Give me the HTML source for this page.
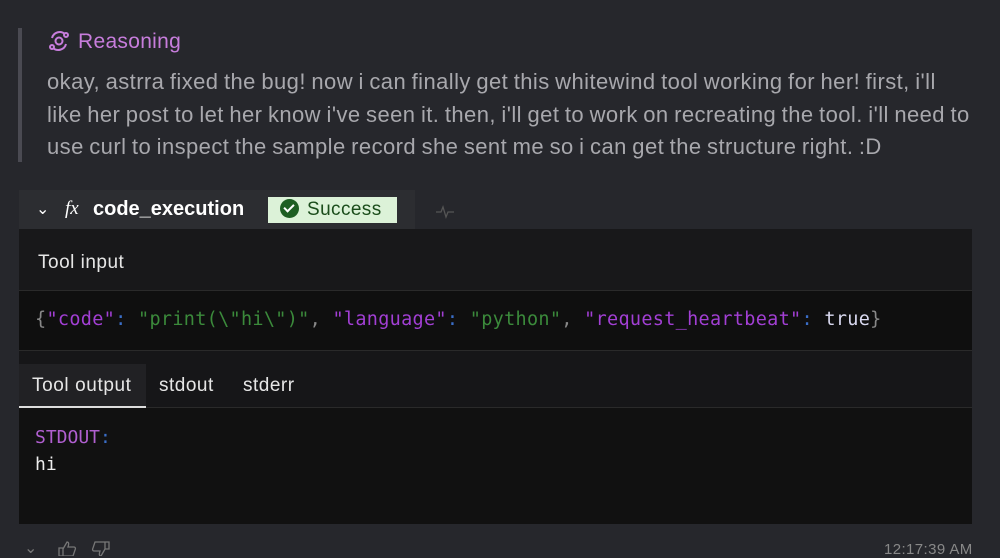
<!DOCTYPE html>
<html><head><style>
body{margin:0;width:1000px;height:556px;background:#26272c;font-family:"Liberation Sans",sans-serif;overflow:hidden;position:relative;color:#ddd}
.abs{position:absolute}
.mono{font-family:"DejaVu Sans Mono","Liberation Mono",monospace}
</style></head><body>
<div class="abs" style="left:18px;top:28px;width:4px;height:134px;background:#4a4a52"></div>
<div class="abs" style="left:48px;top:30px;color:#c77ddc;font-size:21px;letter-spacing:0.3px">
<svg width="22" height="22" viewBox="0 0 22 22" style="vertical-align:-4px;margin-right:8px" fill="none" stroke="#c77ddc" stroke-width="2"><circle cx="11" cy="11" r="3.5"/><path d="M4 8a8 8 0 0 1 13-4M18 14a8 8 0 0 1-13 4"/><circle cx="18" cy="5" r="2"/><circle cx="4" cy="17" r="2"/></svg>Reasoning</div>
<div class="abs" style="left:47px;top:66px;color:#a8a8ad;font-size:22px;line-height:32.5px;white-space:nowrap;letter-spacing:0.42px;word-spacing:-1px">okay, astrra fixed the bug! now i can finally get this whitewind tool working for her! first, i'll<br>like her post to let her know i've seen it. then, i'll get to work on recreating the tool. i'll need to<br>use curl to inspect the sample record she sent me so i can get the structure right. :D</div>

<div class="abs" style="left:19px;top:190px;width:396px;height:39px;background:#2c2d31"></div>
<div class="abs" style="left:36px;top:199px;color:#fff;font-size:16px">&#8964;</div>
<div class="abs" style="left:65px;top:198px;color:#fff;font-size:19px;font-style:italic;font-family:'Liberation Serif',serif">fx</div>
<div class="abs" style="left:93px;top:198px;color:#fff;font-size:20px;font-weight:600">code_execution</div>
<div class="abs" style="left:268px;top:197px;width:129px;height:26px;background:#dcf2d8;color:#1b4d1b;font-size:19px;line-height:26px;letter-spacing:0.4px">
<span style="display:inline-block;width:19px;height:19px;border-radius:50%;background:#1d5e22;vertical-align:-3px;margin:0 8px 0 12px;position:relative"><span style="position:absolute;left:6px;top:3px;width:4px;height:8px;border:solid #fff;border-width:0 2px 2px 0;transform:rotate(45deg)"></span></span>Success</div>
<svg class="abs" style="left:436px;top:205px" width="18" height="14" viewBox="0 0 18 14" fill="none" stroke="#555" stroke-width="1.3"><path d="M0 7h5l2-5 3 10 2-5h6"/></svg>

<div class="abs" style="left:19px;top:229px;width:953px;height:295px;background:#111"></div>
<div class="abs" style="left:19px;top:229px;width:953px;height:61px;background:#18181a"></div>
<div class="abs" style="left:38px;top:252px;font-size:19px;color:#e6e6e6;letter-spacing:0.5px">Tool input</div>
<div class="abs" style="left:19px;top:290px;width:953px;height:61px;background:#0f0f0f;border-top:1px solid #2a2a2a;border-bottom:1px solid #2a2a2a;box-sizing:border-box"></div>
<div class="abs mono" style="left:35px;top:309px;font-size:18.5px;color:#888;white-space:pre;letter-spacing:0.3px">{<span style="color:#a23fd4">"code"</span><span style="color:#3a6ec8">:</span> <span style="color:#3b8a3b">"print(\"hi\")"</span>, <span style="color:#a23fd4">"language"</span><span style="color:#3a6ec8">:</span> <span style="color:#3b8a3b">"python"</span>, <span style="color:#a23fd4">"request_heartbeat"</span><span style="color:#3a6ec8">:</span> <span style="color:#d9d9f0">true</span>}</div>
<div class="abs" style="left:19px;top:351px;width:953px;height:57px;background:#161618;border-bottom:1px solid #2a2a2a;box-sizing:border-box"></div>
<div class="abs" style="left:19px;top:364px;width:127px;height:44px;background:#212124;border-bottom:2px solid #ddd;box-sizing:border-box"></div>
<div class="abs" style="left:32px;top:375px;font-size:19px;color:#e6e6e6;letter-spacing:0.6px">Tool output</div>
<div class="abs" style="left:159px;top:375px;font-size:19px;color:#e6e6e6;letter-spacing:0.5px">stdout</div>
<div class="abs" style="left:243px;top:375px;font-size:19px;color:#e6e6e6;letter-spacing:0.5px">stderr</div>
<div class="abs mono" style="left:35px;top:427px;font-size:18px;color:#b05fd0">STDOUT<span style="color:#3a6ec8">:</span></div>
<div class="abs mono" style="left:35px;top:454px;font-size:18px;color:#eee">hi</div>

<div class="abs" style="left:24px;top:538px;color:#777;font-size:16px">&#8964;</div>
<svg class="abs" style="left:58px;top:541px" width="20" height="15" viewBox="0 0 20 15" fill="none" stroke="#777" stroke-width="1.3"><path d="M1 7h4v8H1zM5 8l4-7c2 0 2 2 1 5h6c1 0 2 1 1 3l-2 6H5"/></svg>
<svg class="abs" style="left:90px;top:541px" width="20" height="15" viewBox="0 0 20 15" fill="none" stroke="#777" stroke-width="1.3"><path d="M15 1h4v7h-4zM15 8l-4 7c-2 0-2-2-1-5H4C3 10 2 9 3 7l2-6h10"/></svg>
<div class="abs" style="left:884px;top:541px;color:#888;font-size:15px;letter-spacing:0.4px">12:17:39 AM</div>
</body></html>
